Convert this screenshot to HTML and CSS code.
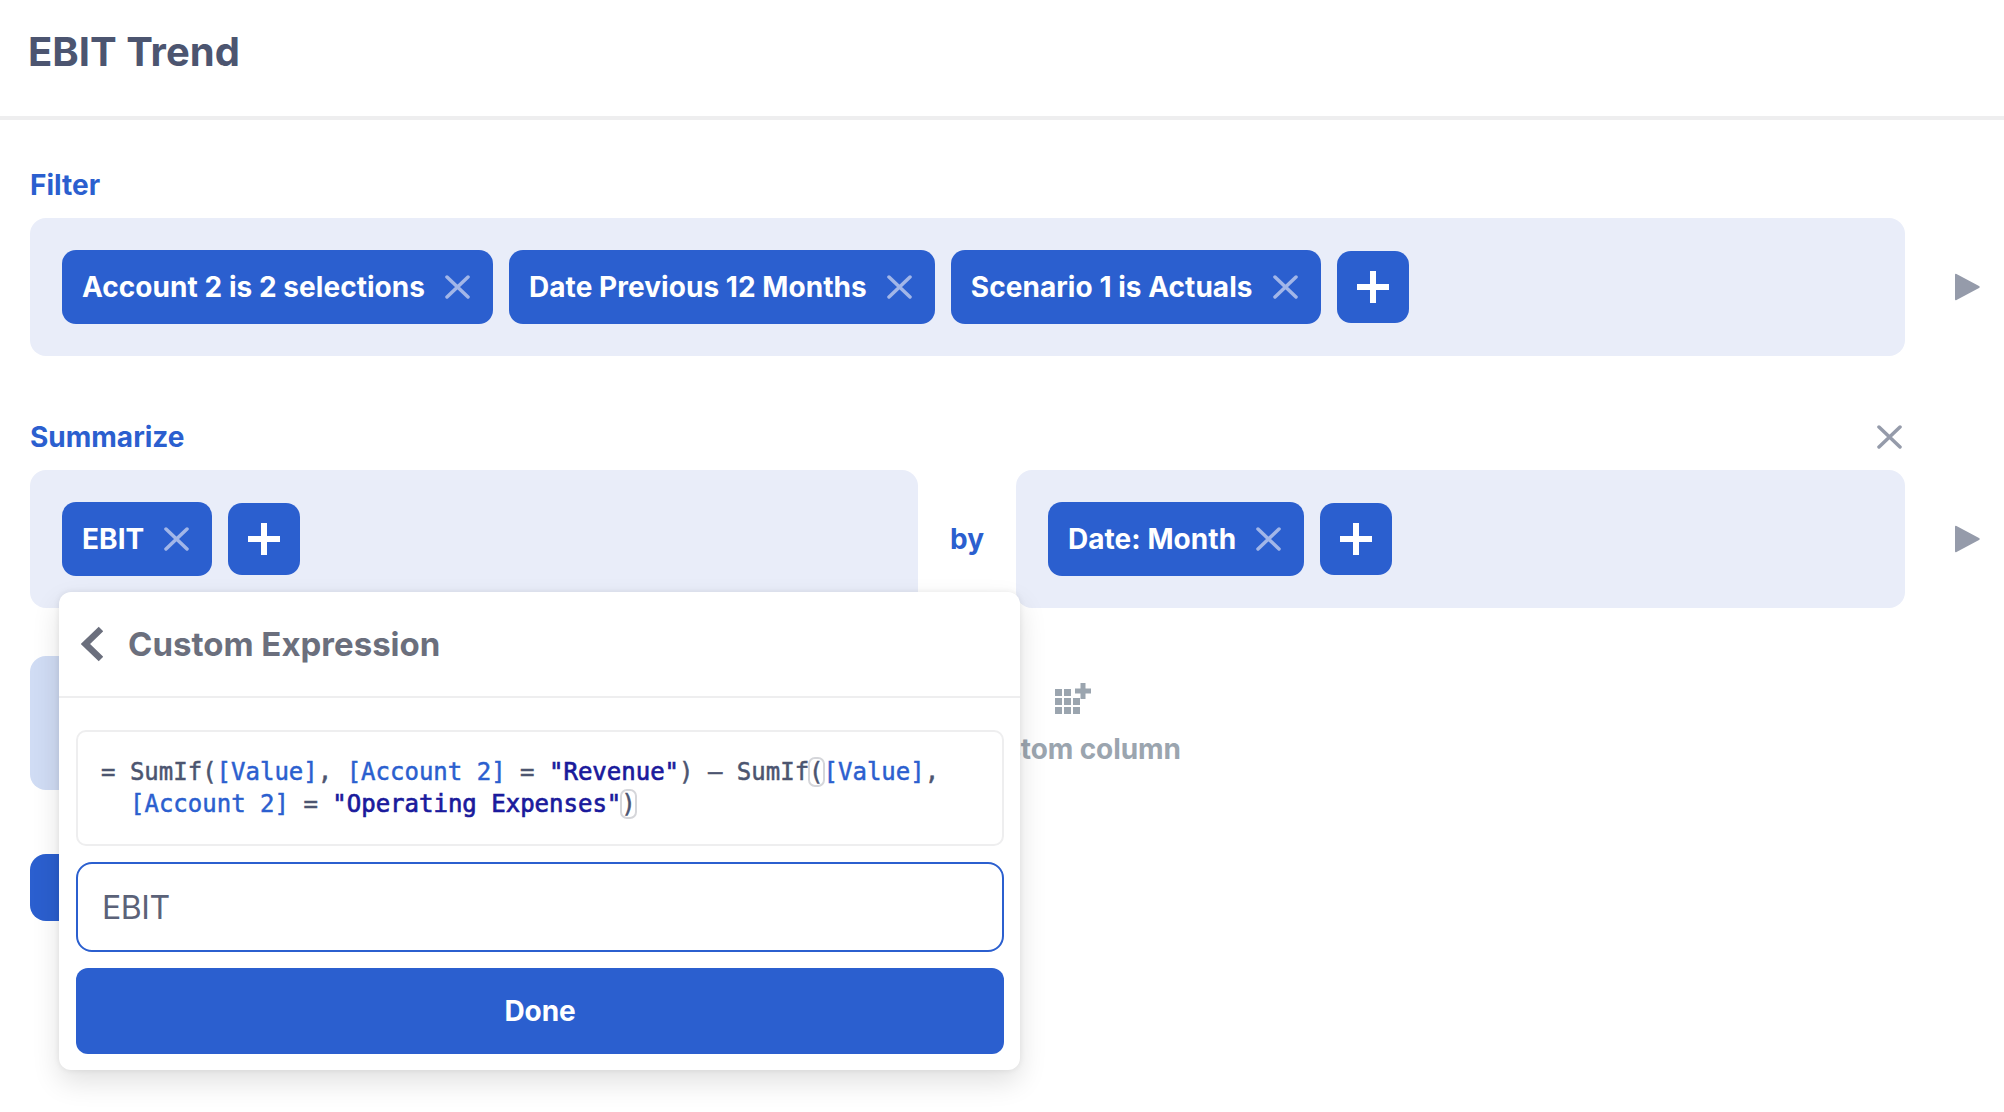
FILE: index.html
```html
<!DOCTYPE html>
<html lang="en">
<head>
<meta charset="utf-8">
<title>EBIT Trend</title>
<link rel="stylesheet" href="styles.css">
</head>
<body>
<header class="page-header"><h1 class="page-title">EBIT Trend</h1></header>
<main class="main">
  <section class="section">
    <div class="section-head"><h2 class="section-label">Filter</h2></div>
    <div class="row">
      <div class="panel">
        <div class="chip"><span>Account 2 is 2 selections</span><svg class="chip-x" viewBox="0 0 25 24"><path d="M2 2 23 22M23 2 2 22"/></svg></div>
        <div class="chip"><span>Date Previous 12 Months</span><svg class="chip-x" viewBox="0 0 25 24"><path d="M2 2 23 22M23 2 2 22"/></svg></div>
        <div class="chip"><span>Scenario 1 is Actuals</span><svg class="chip-x" viewBox="0 0 25 24"><path d="M2 2 23 22M23 2 2 22"/></svg></div>
        <button class="add"><svg class="add-icon" viewBox="0 0 32 32"><path d="M13 0h6v13h13v6H19v13h-6V19H0v-6h13z"/></svg></button>
      </div>
      <svg class="arrow" viewBox="0 0 25 28"><path d="M1.500 1 24 13a1.200 1.200 0 0 1 0 2L1.500 27a1 1 0 0 1-1.500-.8V1.800A1 1 0 0 1 1.500 1z"/></svg>
    </div>
  </section>

  <section class="section section-summarize">
    <div class="section-head">
      <h2 class="section-label">Summarize</h2>
      <svg class="close" viewBox="0 0 25 24"><path d="M2 2 23 22M23 2 2 22"/></svg>
    </div>
    <div class="row">
      <div class="split">
        <div class="panel">
          <div class="chip"><span>EBIT</span><svg class="chip-x" viewBox="0 0 25 24"><path d="M2 2 23 22M23 2 2 22"/></svg></div>
          <button class="add"><svg class="add-icon" viewBox="0 0 32 32"><path d="M13 0h6v13h13v6H19v13h-6V19H0v-6h13z"/></svg></button>
        </div>
        <div class="by">by</div>
        <div class="panel">
          <div class="chip"><span>Date: Month</span><svg class="chip-x" viewBox="0 0 25 24"><path d="M2 2 23 22M23 2 2 22"/></svg></div>
          <button class="add"><svg class="add-icon" viewBox="0 0 32 32"><path d="M13 0h6v13h13v6H19v13h-6V19H0v-6h13z"/></svg></button>
        </div>
      </div>
      <svg class="arrow" viewBox="0 0 25 28"><path d="M1.500 1 24 13a1.200 1.200 0 0 1 0 2L1.500 27a1 1 0 0 1-1.500-.8V1.800A1 1 0 0 1 1.500 1z"/></svg>
    </div>
  </section>

  <div class="tiles">
    <div class="tile"></div>
    <div class="tile-item">
      <svg class="column-icon" viewBox="0 0 36 32">
        <path d="M0 6h7v7H0zM9 6h7v7H9zM0 15h7v7H0zM9 15h7v7H9zM18 15h7v7h-7zM0 24h7v7H0zM9 24h7v7H9zM18 24h7v7h-7z"/>
        <path d="M25.500 0h5v5.500H36v5h-5.500V16h-5v-5.500H20v-5h5.500z"/>
      </svg>
      <span class="tile-label">Custom column</span>
    </div>
  </div>
  <div class="primary-behind"></div>
</main>

<div class="popover">
  <div class="popover-head">
    <svg class="back" viewBox="0 0 22 36"><path d="M20 3 4.500 18 20 33"/></svg>
    <span class="popover-title">Custom Expression</span>
  </div>
  <div class="popover-body">
    <div class="code">
      <div class="code-line"><span class="op">= </span><span class="fn">SumIf(</span><span class="field">[Value]</span><span class="fn">, </span><span class="field">[Account 2]</span><span class="op"> = </span><span class="str">"Revenue"</span><span class="fn">) &#8211; SumIf</span><span class="fn match">(</span><span class="field">[Value]</span><span class="fn">,</span></div>
      <div class="code-line code-cont"><span class="field">[Account 2]</span><span class="op"> = </span><span class="str">"Operating Expenses"</span><span class="fn match">)</span></div>
    </div>
    <div class="name-input">EBIT</div>
    <button class="done">Done</button>
  </div>
</div>
</body>
</html>
```
FILE: styles.css
```css
* { box-sizing: border-box; }
html, body { margin: 0; padding: 0; background: #fff; }
body {
  width: 2004px;
  height: 1112px;
  overflow: hidden;
  position: relative;
  font-family: "Inter", "Liberation Sans", sans-serif;
}
.page-header {
  height: 120px;
  padding-left: 28px;
  border-bottom: 4px solid #eeeeef;
  display: flex;
  align-items: center;
  padding-bottom: 12px;
}
.page-title {
  margin: 0;
  font-size: 40px;
  line-height: 48px;
  font-weight: 700;
  color: #4c5570;
}
.main { padding: 48px 0 0 30px; }
.section-head {
  width: 1875px;
  height: 34px;
  margin-bottom: 16px;
  display: flex;
  justify-content: space-between;
  align-items: center;
  padding-right: 3px;
}
.section-label {
  margin: 0;
  font-size: 28px;
  line-height: 34px;
  font-weight: 700;
  color: #2b5fcf;
}
.section-summarize { margin-top: 64px; }
.row {
  display: grid;
  grid-template-columns: 1875px 25px;
  column-gap: 50px;
  align-items: center;
}
.panel {
  height: 138px;
  padding: 32px;
  border-radius: 16px;
  background: #e9edf9;
  display: flex;
  align-items: center;
  gap: 16px;
}
.split {
  display: grid;
  grid-template-columns: 888px 98px 889px;
  align-items: center;
}
.by {
  text-align: center;
  font-size: 28px;
  font-weight: 700;
  color: #2b5fcf;
}
.chip {
  height: 74px;
  padding: 0 23px 0 20px;
  border-radius: 14px;
  background: #2b5fcf;
  color: #fff;
  font-size: 28px;
  font-weight: 700;
  letter-spacing: 0.05px;
  display: flex;
  align-items: center;
  gap: 20px;
  white-space: nowrap;
}
.chip-x, .close {
  width: 25px;
  height: 24px;
  fill: none;
  stroke-width: 3.500;
  stroke-linecap: round;
}
.chip-x { stroke: #a2b6e8; }
.close { stroke: #959baa; }
.add {
  width: 72px;
  height: 72px;
  padding: 0;
  border: 0;
  border-radius: 14px;
  background: #2b5fcf;
  display: flex;
  align-items: center;
  justify-content: center;
}
.add-icon { width: 32px; height: 32px; fill: #fff; }
.arrow { width: 25px; height: 28px; fill: #959baa; }
.tiles {
  margin-top: 48px;
  height: 134px;
  display: flex;
}
.tile {
  width: 920px;
  border-radius: 16px;
  background: #d0dcf4;
}
.tile-item {
  margin-left: 14px;
  width: 220px;
  display: flex;
  flex-direction: column;
  align-items: center;
}
.column-icon {
  width: 36px;
  height: 32px;
  margin: 27px 2px 0 0;
  fill: #9ba5af;
}
.tile-label {
  margin-top: 17px;
  font-size: 28px;
  line-height: 34px;
  font-weight: 700;
  letter-spacing: -0.1px;
  color: #9ba5af;
  white-space: nowrap;
}
.primary-behind {
  margin-top: 64px;
  width: 300px;
  height: 67px;
  border-radius: 16px;
  background: #2b5fcf;
}
.popover {
  position: absolute;
  left: 59px;
  top: 592px;
  width: 961px;
  height: 478px;
  border-radius: 12px;
  background: #fff;
  box-shadow: 0 12px 28px rgba(0, 0, 0, .12), 0 0 6px rgba(0, 0, 0, .08);
}
.popover-head {
  height: 106px;
  border-bottom: 2px solid #eeeeef;
  padding-left: 22px;
  display: flex;
  align-items: center;
  gap: 25px;
}
.back {
  width: 22px;
  height: 36px;
  fill: none;
  stroke: #6b6f7d;
  stroke-width: 6.500;
}
.popover-title {
  font-size: 33px;
  font-weight: 700;
  color: #6b6f7d;
}
.popover-body {
  padding: 32px 16px 16px 17px;
  display: flex;
  flex-direction: column;
  gap: 16px;
}
.code {
  height: 116px;
  padding: 24px 24px 24px 23px;
  border: 2px solid #eeeeef;
  border-radius: 10px;
  font-family: "DejaVu Sans Mono", "Liberation Mono", monospace;
  font-size: 24px;
  line-height: 32px;
  -webkit-text-stroke: 0.5px currentColor;
}
.code-line { white-space: pre; }
.code-cont { padding-left: 29px; }
.op, .fn { color: #4c5570; }
.field { color: #2b5fcf; }
.str { color: #1a1a9c; -webkit-text-stroke-width: 0.7px; }
.match { outline: 2px solid #d5d6da; outline-offset: -1px; border-radius: 6px; }
.name-input {
  height: 90px;
  padding: 0 24px;
  border: 2px solid #2b5fcf;
  border-radius: 16px;
  display: flex;
  align-items: center;
  font-size: 32px;
  font-weight: 400;
  letter-spacing: -0.4px;
  color: #5b6278;
}
.done {
  height: 86px;
  padding: 0;
  border: 0;
  border-radius: 12px;
  background: #2b5fcf;
  color: #fff;
  font-family: inherit;
  font-size: 28px;
  font-weight: 700;
  letter-spacing: -0.1px;
}
```
